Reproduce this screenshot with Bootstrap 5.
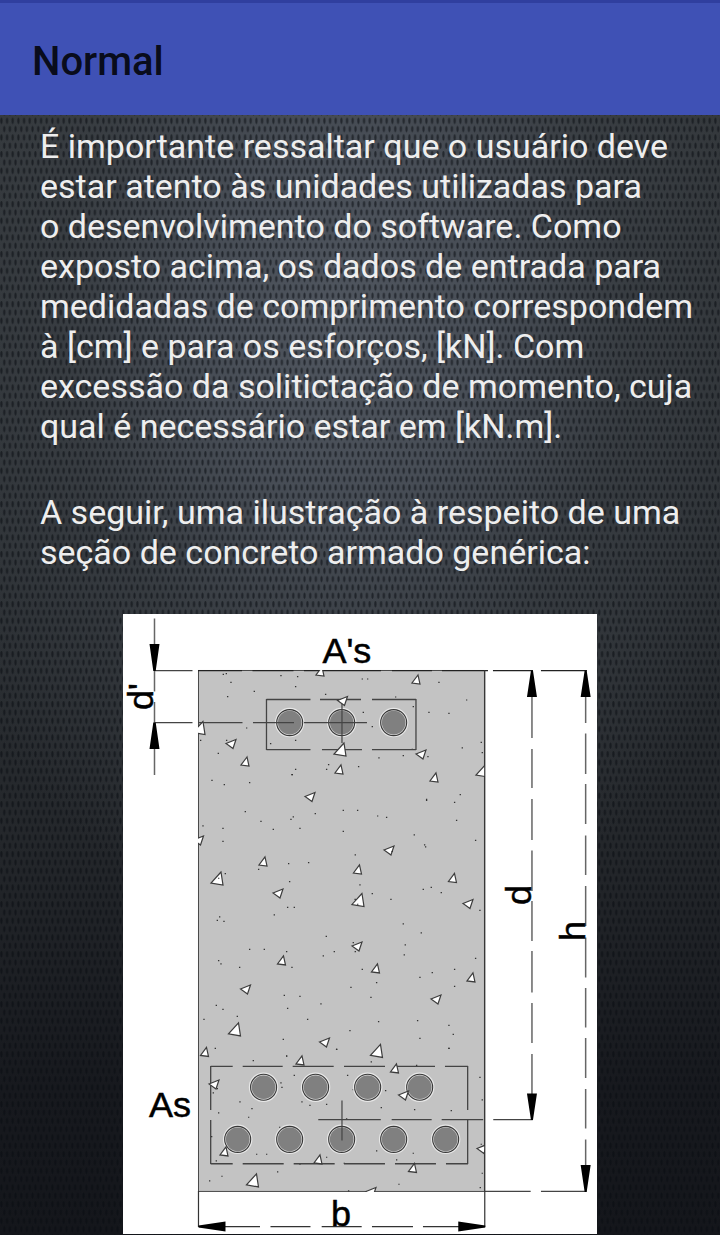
<!DOCTYPE html>
<html lang="pt-BR">
<head>
<meta charset="utf-8">
<meta name="viewport" content="width=device-width, initial-scale=1">
<title>Normal</title>
<link href="https://cdn.jsdelivr.net/npm/bootstrap@5.3.0/dist/css/bootstrap.min.css" rel="stylesheet">
<style>
  body {
    font-family: Roboto, "Noto Sans", sans-serif;
    color: #eee;
    background-color: #15171a;
    background-image:
      url("data:image/svg+xml,%3Csvg xmlns='http://www.w3.org/2000/svg' width='17' height='50'%3E%3Cdefs%3E%3Cpattern id='m' width='5.667' height='16.667' patternUnits='userSpaceOnUse'%3E%3Cg fill='%23080c12' fill-opacity='.58'%3E%3Cellipse cx='1.4' cy='4.2' rx='1.1' ry='3.1'/%3E%3Cellipse cx='4.23' cy='12.5' rx='1.1' ry='3.1'/%3E%3C/g%3E%3C/pattern%3E%3C/defs%3E%3Crect width='17' height='50' fill='url(%23m)'/%3E%3C/svg%3E"),
      radial-gradient(ellipse 66% 50% at 48% 26%, #50565f 0%, rgba(74, 80, 89, .9) 30%, rgba(62, 67, 73, .6) 60%, rgba(46, 50, 54, 0) 100%),
      linear-gradient(#33373a 0%, #2c3034 45%, #24272b 68%, #17191e 88%, #14161b 100%);
  }
  .app-bar { background: #3f51b5; border-top: 3px solid #303f9f; min-height: 115px; padding: 6px 32px 0; }
  .app-title { font-size: 40px; line-height: 48px; font-weight: 500; color: rgba(0, 0, 0, .87); }
  .article { padding: 11px 24px 1px 40px; }
  .article p { font-size: 34px; line-height: 40px; margin-bottom: 46px; }
  .article p:last-of-type { margin-bottom: 42px; }
  .section-figure { width: 72.25%; margin-right: 16px; }
  .section-figure svg { display: block; width: 100%; background: #fff; overflow: visible; }
  .section-figure text { font-family: "Liberation Sans", Arial, sans-serif; font-size: 36px; fill: #000; stroke: #000; stroke-width: .5; }
</style>
</head>
<body class="min-vh-100 d-flex flex-column">
<header class="app-bar d-flex align-items-center">
  <h1 class="app-title mb-0">Normal</h1>
</header>
<main class="article flex-grow-1 d-flex flex-column">
  <p>É importante ressaltar que o usuário deve estar atento às unidades utilizadas para o&nbsp;desenvolvimento do software. Como exposto acima, os dados de entrada para medidadas de comprimento correspondem à [cm] e para os esforços, [kN]. Com excessão da solitictação de momento, cuja qual é necessário estar em [kN.m].</p>
  <p>A seguir, uma ilustração à respeito de uma seção de concreto armado genérica:</p>
  <figure class="section-figure align-self-center mb-0">
    <svg viewBox="123 614 474 620" role="img" aria-label="Seção de concreto armado">
      <defs>
        <clipPath id="beam"><rect x="198" y="670" width="287" height="522"/></clipPath>
        <path id="up" d="M0 0l-6 8 8 1z"/>
        <path id="side" d="M0 0l10-4-3 9z"/>
        <path id="big" d="M0 0l-10 11 12 2z"/>
        <g id="bar"><circle r="14" fill="none" stroke="#e8e8e8" stroke-width="1.5"/><circle r="13" fill="#d6d6d6" stroke="#383838" stroke-width="1.1"/><circle r="11.8" fill="#808080"/></g>
      </defs>
      <rect x="198.5" y="670.5" width="286" height="521" fill="#c3c3c3" stroke="#4a4a4a"/>

      <!-- fine aggregate -->
      <g clip-path="url(#beam)" fill="none" stroke="#333" stroke-width="3.6">
        <path transform="translate(120 610) scale(.3333)" d="M308 193h4M317 191h4M331 217h4M321 260h4M401 244h4M481 197h4M531 200h4M525 230h4M615 253h4M378 354h4M318 391h4M240 391h4M450 401h4M525 391h4M293 430h4M525 478h4M515 494h4M618 478h4M624 464h4M714 470h4"/>
        <path transform="translate(360 610) scale(.3333)" d="M5 207h4M21 207h4M235 217h4M105 261h4M158 290h4M205 307h4M265 310h4M318 270h4M8 307h4M35 350h4M362 397h4M365 428h4M305 414h4M155 418h4M128 437h4M55 444h4M202 440h4"/>
        <path transform="translate(190 770) scale(.3333)" d="M64 31h4M101 44h4M177 38h4M304 14h4M164 125h4M211 154h4M301 148h4M308 141h4M374 131h4M458 121h4M501 121h4M561 138h4M588 142h4M97 175h4M37 168h4M248 178h4M328 175h4M458 184h4M97 214h4M671 195h4M702 225h4M705 231h4M855 211h4M798 151h4M792 97h4M809 74h4M708 88h4M708 91h4M494 255h4M294 281h4M354 278h4M204 298h4M104 311h4M297 335h4M508 345h4M545 371h4M601 388h4M698 358h4M722 352h4M752 368h4M868 421h4M291 412h4M311 412h4M251 435h4M87 441h4"/>
        <path transform="translate(190 910) scale(.3333)" d="M80 31h4M100 34h4M407 79h4M638 42h4M692 69h4M644 105h4M641 135h4M431 125h4M398 138h4M488 98h4M494 125h4M288 125h4M221 118h4M177 118h4M84 152h4M91 162h4M147 172h4M304 172h4M515 178h4M855 145h4M792 178h4M725 188h4M688 202h4M792 229h4M558 218h4M481 232h4M541 262h4M281 256h4M328 259h4M291 295h4M391 282h4M77 286h4M97 298h4M140 319h4M40 328h4M351 328h4M564 335h4M478 362h4M681 332h4M775 346h4M788 373h4M688 385h4M775 415h4M278 388h4M74 415h4M438 418h4M288 439h4"/>
        <path transform="translate(120 1040) scale(.3333)" d="M398 62h4M498 48h4M648 28h4M521 106h4M681 106h4M481 129h4M484 142h4M278 159h4M290 146h4M358 186h4M394 206h4M384 232h4M294 219h4M544 186h4M568 196h4M618 193h4M698 149h4M477 262h4M678 237h4M273 290h4M408 343h4M438 343h4M287 363h4M618 352h4M471 396h4M304 409h4M267 423h4M538 373h4M671 370h4M684 453h4"/>
        <path transform="translate(360 1040) scale(.3333)" d="M265 25h4M32 66h4M168 76h4M358 112h4M365 180h4M75 152h4M62 203h4M162 209h4M272 212h4M48 333h4M158 340h4M108 360h4M115 433h4M362 313h4M365 400h4M359 443h4"/>
      </g>

      <!-- reinforcement frames and centre lines -->
      <g fill="none" stroke="#444" stroke-width="1.3">
        <path stroke="#222" d="M198 670.7h44M252.500 670.700h41M304 670.700h77M392 670.700h40M442 670.700h43M485 670.700h3M493 670.700h40M541 670.700h46"/>
        <path d="M266.500 699.500h44M320 699.500h41M372 699.500h44M266.500 749.700h44M322 749.700h40M372 749.700h44M266.500 699v51M416 699v51"/>
        <path d="M210.700 1066.500h22M242.700 1066.500h40M292.700 1066.500h41M344 1066.500h41M395 1066.500h40M445 1066.500h23M210.700 1163.800h22M242.700 1163.800h41M293.700 1163.800h41M344 1163.800h41M395 1163.800h41M446 1163.800h22M210.700 1066v44M210.700 1120v44M467.700 1066v44M467.700 1120v44"/>
      </g>
      <g>
        <use href="#bar" x="289.7" y="722.6"/><use href="#bar" x="341.7" y="722.6"/><use href="#bar" x="393.7" y="722.6"/>
        <use href="#bar" x="263.6" y="1087.3"/><use href="#bar" x="315.6" y="1087.3"/><use href="#bar" x="367.7" y="1087.3"/><use href="#bar" x="419.7" y="1087.3"/>
        <use href="#bar" x="237.7" y="1139.4"/><use href="#bar" x="289.7" y="1139.4"/><use href="#bar" x="341.7" y="1139.4"/><use href="#bar" x="393.7" y="1139.4"/><use href="#bar" x="445.7" y="1139.4"/>
      </g>
      <path fill="none" stroke="#444" stroke-width="1.2" d="M154.500 722.600h38M198 722.600h44.500M253 722.600h41M304 722.600h63M342 700v43M318.300 1119.600h62.500M391.700 1119.600h40M441.700 1119.600h41.500M493.300 1119.600h39.500M342 1100.500v40M485 1191.500h45.700M541 1191.500h45.500M154.500 670.700h38"/>

      <!-- coarse aggregate -->
      <g clip-path="url(#beam)" fill="#fff" stroke="#3c3c3c" stroke-width="1.2">
        <use href="#up" x="322" y="667"/><use href="#up" x="418" y="675"/><use href="#up" x="247" y="757"/><use href="#up" x="341" y="765"/><use href="#up" x="436" y="773"/><use href="#up" x="265" y="857"/><use href="#up" x="359.500" y="865"/><use href="#up" x="454.500" y="873.500"/><use href="#up" x="283.500" y="956"/><use href="#up" x="377.500" y="964"/><use href="#up" x="473" y="973"/><use href="#up" x="206.500" y="1047.500"/><use href="#up" x="302" y="1056"/><use href="#up" x="226" y="1147"/><use href="#up" x="320" y="1155"/><use href="#up" x="396.500" y="1064"/><use href="#up" x="414.500" y="1163.500"/>
        <use href="#side" x="226" y="743.500"/><use href="#side" x="337.500" y="700.500"/><use href="#side" x="416" y="754"/><use href="#side" x="305" y="796.500"/><use href="#side" x="384" y="850"/><use href="#side" x="273" y="893"/><use href="#side" x="463" y="903.500"/><use href="#side" x="352" y="946"/><use href="#side" x="240.500" y="989"/><use href="#side" x="431" y="999"/><use href="#side" x="319.500" y="1042"/><use href="#side" x="209" y="1084"/><use href="#side" x="398.500" y="1095"/><use href="#side" x="477" y="1148.500"/><use href="#side" x="193.500" y="840"/><use href="#side" x="366" y="1191.500"/>
        <use href="#big" x="344" y="743"/><use href="#big" x="221" y="872"/><use href="#big" x="362" y="893.500"/><use href="#big" x="486" y="764"/><use href="#big" x="238.500" y="1023"/><use href="#big" x="380.500" y="1044.500"/><use href="#big" x="256.500" y="1174"/><use href="#big" x="203" y="721.500"/>
      </g>
      <path stroke="#333" stroke-width="1.2" d="M218 878.300h1.400M357 904.300h1.400M354.500 899.500h1.400M391.500 851.500h1.400"/>

      <!-- dimension lines -->
      <g fill="none" stroke="#666" stroke-width="1.5">
        <path d="M154.500 618.500v73M154.500 702v73"/>
        <path d="M532 671v67M532 749v39M532 799v41M532 850.500v40.500M532 901v40M532 951v41.500M532 1003v40M532 1054v66"/>
        <path d="M585.700 671v52M585.700 733.500v40.500M585.700 784v40M585.700 835.500v39.500M585.700 886v40M585.700 937.500v40M585.700 988v39.500M585.700 1038v40M585.700 1089v39.500M585.700 1139.500v52"/>
        <path stroke="#333" stroke-width="1.2" d="M198.500 1191v36M484.800 670v557M199 1226.600h61M270.500 1226.600h40M321.700 1226.600h40M372 1226.600h41M423 1226.600h62"/>
      </g>
      <path fill="#000" d="M149.500 644h10l-3.800 27h-2.400zM149.500 749h10l-3.800-26.500h-2.400zM527 697h10l-4-26.500h-2zM527 1093.500h10l-4 26.500h-2zM580.700 697h10l-4-26.500h-2zM580.700 1165h10l-4 27h-2zM225.500 1221.600v10l-27-4v-2zM458.300 1221.600v10l27-4v-2z"/>

      <text x="322.500" y="663">A's</text>
      <text x="149" y="1117">As</text>
      <text x="331" y="1226">b</text>
      <text transform="translate(153 710) rotate(-90)">d'</text>
      <text transform="translate(531 905) rotate(-90)">d</text>
      <text transform="translate(585.500 941) rotate(-90)">h</text>
    </svg>
  </figure>
</main>
<script src="https://cdn.jsdelivr.net/npm/bootstrap@5.3.0/dist/js/bootstrap.bundle.min.js"></script>
</body>
</html>
